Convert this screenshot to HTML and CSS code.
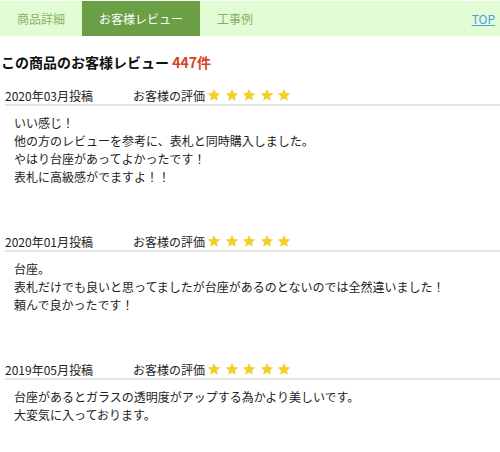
FILE: index.html
```html
<!DOCTYPE html>
<html lang="ja">
<head>
    <meta charset="UTF-8">
    <meta name="viewport" content="width=device-width, initial-scale=1.0">
    <title>お客様レビュー</title>
    <link rel="stylesheet" href="styles.css">
</head>
<body>

<div class="tab-bar">
    <a class="tab" href="#">商品詳細</a>
    <a class="tab active" href="#">お客様レビュー</a>
    <a class="tab" href="#">工事例</a>
    <a class="top-link" href="#">TOP</a>
</div>

<h2 class="review-title">この商品のお客様レビュー <span class="review-count">447件</span></h2>

<!-- review list -->
<div class="review">
    <div class="review-head">
        <span class="review-date">2020年03月投稿</span>
        <span class="review-label">お客様の評価</span>
        <span class="stars">
            <svg viewBox="0 0 24 24"><path d="M12 1.5l3.2 7.1 7.6.7-5.8 5.1 1.8 7.6L12 18l-6.8 4 1.8-7.6-5.8-5.1 7.6-.7z"/></svg>
            <svg viewBox="0 0 24 24"><path d="M12 1.5l3.2 7.1 7.6.7-5.8 5.1 1.8 7.6L12 18l-6.8 4 1.8-7.6-5.8-5.1 7.6-.7z"/></svg>
            <svg viewBox="0 0 24 24"><path d="M12 1.5l3.2 7.1 7.6.7-5.8 5.1 1.8 7.6L12 18l-6.8 4 1.8-7.6-5.8-5.1 7.6-.7z"/></svg>
            <svg viewBox="0 0 24 24"><path d="M12 1.5l3.2 7.1 7.6.7-5.8 5.1 1.8 7.6L12 18l-6.8 4 1.8-7.6-5.8-5.1 7.6-.7z"/></svg>
            <svg viewBox="0 0 24 24"><path d="M12 1.5l3.2 7.1 7.6.7-5.8 5.1 1.8 7.6L12 18l-6.8 4 1.8-7.6-5.8-5.1 7.6-.7z"/></svg>
        </span>
    </div>
    <p class="review-body">いい感じ！<br>他の方のレビューを参考に、表札と同時購入しました。<br>やはり台座があってよかったです！<br>表札に高級感がでますよ！！</p>
</div>

<div class="review">
    <div class="review-head">
        <span class="review-date">2020年01月投稿</span>
        <span class="review-label">お客様の評価</span>
        <span class="stars">
            <svg viewBox="0 0 24 24"><path d="M12 1.5l3.2 7.1 7.6.7-5.8 5.1 1.8 7.6L12 18l-6.8 4 1.8-7.6-5.8-5.1 7.6-.7z"/></svg>
            <svg viewBox="0 0 24 24"><path d="M12 1.5l3.2 7.1 7.6.7-5.8 5.1 1.8 7.6L12 18l-6.8 4 1.8-7.6-5.8-5.1 7.6-.7z"/></svg>
            <svg viewBox="0 0 24 24"><path d="M12 1.5l3.2 7.1 7.6.7-5.8 5.1 1.8 7.6L12 18l-6.8 4 1.8-7.6-5.8-5.1 7.6-.7z"/></svg>
            <svg viewBox="0 0 24 24"><path d="M12 1.5l3.2 7.1 7.6.7-5.8 5.1 1.8 7.6L12 18l-6.8 4 1.8-7.6-5.8-5.1 7.6-.7z"/></svg>
            <svg viewBox="0 0 24 24"><path d="M12 1.5l3.2 7.1 7.6.7-5.8 5.1 1.8 7.6L12 18l-6.8 4 1.8-7.6-5.8-5.1 7.6-.7z"/></svg>
        </span>
    </div>
    <p class="review-body">台座。<br>表札だけでも良いと思ってましたが台座があるのとないのでは全然違いました！<br>頼んで良かったです！</p>
</div>

<div class="review">
    <div class="review-head">
        <span class="review-date">2019年05月投稿</span>
        <span class="review-label">お客様の評価</span>
        <span class="stars">
            <svg viewBox="0 0 24 24"><path d="M12 1.5l3.2 7.1 7.6.7-5.8 5.1 1.8 7.6L12 18l-6.8 4 1.8-7.6-5.8-5.1 7.6-.7z"/></svg>
            <svg viewBox="0 0 24 24"><path d="M12 1.5l3.2 7.1 7.6.7-5.8 5.1 1.8 7.6L12 18l-6.8 4 1.8-7.6-5.8-5.1 7.6-.7z"/></svg>
            <svg viewBox="0 0 24 24"><path d="M12 1.5l3.2 7.1 7.6.7-5.8 5.1 1.8 7.6L12 18l-6.8 4 1.8-7.6-5.8-5.1 7.6-.7z"/></svg>
            <svg viewBox="0 0 24 24"><path d="M12 1.5l3.2 7.1 7.6.7-5.8 5.1 1.8 7.6L12 18l-6.8 4 1.8-7.6-5.8-5.1 7.6-.7z"/></svg>
            <svg viewBox="0 0 24 24"><path d="M12 1.5l3.2 7.1 7.6.7-5.8 5.1 1.8 7.6L12 18l-6.8 4 1.8-7.6-5.8-5.1 7.6-.7z"/></svg>
        </span>
    </div>
    <p class="review-body">台座があるとガラスの透明度がアップする為かより美しいです。<br>大変気に入っております。</p>
</div>

</body>
</html>
```

FILE: styles.css
```css
body {
    margin: 0;
    font-family: "Noto Sans CJK JP", "Noto Sans", sans-serif;
    font-size: 12px;
    color: #222;
    background-color: #fff;
}

.tab-bar {
    display: flex;
    align-items: stretch;
    height: 35px;
    margin-top: 1px;
    background-color: #e2fcd5;
}

.tab {
    display: flex;
    align-items: center;
    padding: 0 17px;
    color: #86b264;
    text-decoration: none;
}

.tab.active {
    background-color: #6a9f45;
    color: #fff;
}

.top-link {
    margin-left: auto;
    align-self: center;
    padding-right: 5px;
    color: #4aa0dc;
    text-decoration: underline;
}

.review-title {
    margin: 16px 0 14px 1px;
    font-size: 14px;
    line-height: 20px;
    font-weight: bold;
    color: #111;
}

.review-count {
    color: #d6441e;
}

.review {
    margin: 0 0 46px 5px;
}

.review-head {
    display: flex;
    align-items: center;
    height: 18px;
    border-bottom: 2px solid #e3e3e3;
}

.review-date {
    width: 128px;
}

.stars {
    display: flex;
    gap: 3.5px;
    margin-left: 2px;
}

.stars svg {
    width: 14px;
    height: 14px;
    fill: #f2d02c;
}

.review-body {
    margin: 0;
    padding: 8px 9px 0;
    line-height: 18px;
}
```
